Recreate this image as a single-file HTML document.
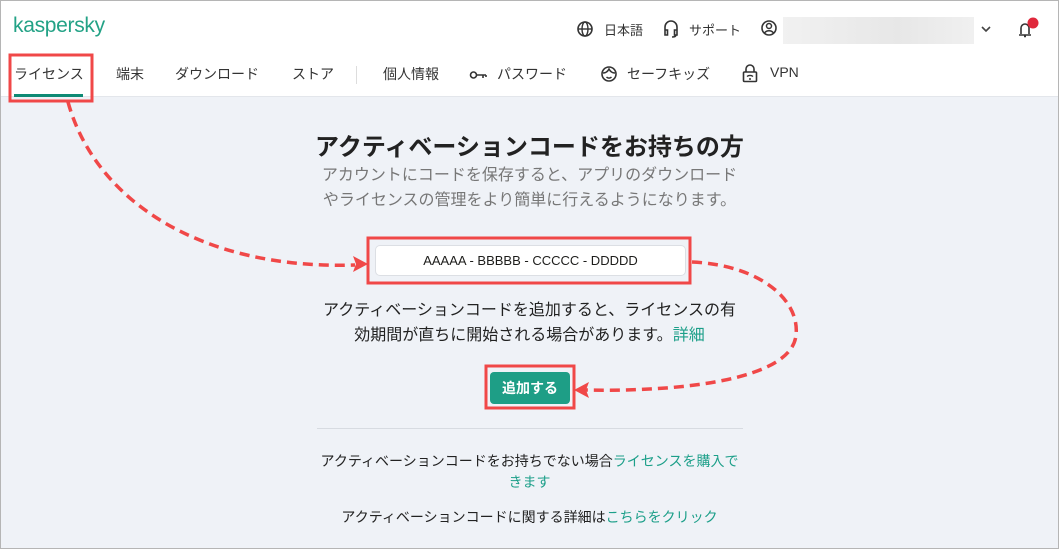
<!DOCTYPE html>
<html><head><meta charset="utf-8"><style>
*{margin:0;padding:0;box-sizing:border-box}
body{width:1059px;height:549px;overflow:hidden;background:#eff2f7;font-family:"Liberation Sans","Noto Sans CJK JP",sans-serif;color:#1d1d1b;position:relative}
.frame{position:absolute;inset:0;border:1px solid #b5b5b5;pointer-events:none;z-index:5}
.hdr{position:absolute;left:0;top:0;width:1059px;height:97px;background:#fff;border-bottom:1px solid #e3e6eb}
.t{position:absolute;white-space:nowrap}
.logo{left:13px;top:14px;font-size:21px;color:#23a286;letter-spacing:-0.3px}
.nav{top:64px;font-size:14px;color:#333}
.top{top:20px;font-size:13px;color:#333}
.c{position:absolute;left:0;width:1059px;text-align:center}
a{color:#1c9f89;text-decoration:none}
</style></head><body>
<div class="hdr"></div>
<div class="t logo">kaspersky</div>
<div class="t nav" style="left:14px">ライセンス</div>
<div style="position:absolute;left:14px;top:94px;width:69px;height:3px;background:#0e8a74"></div>
<div class="t nav" style="left:116px">端末</div>
<div class="t nav" style="left:175px">ダウンロード</div>
<div class="t nav" style="left:292px">ストア</div>
<div style="position:absolute;left:356px;top:66px;width:1px;height:18px;background:#ddd"></div>
<div class="t nav" style="left:383px">個人情報</div>
<svg style="position:absolute;left:469px;top:70px" width="20" height="10"><circle cx="4.5" cy="5" r="3" fill="none" stroke="#333" stroke-width="1.6"/><path d="M7.5 5H17M14 5v3M17 5v2" stroke="#333" stroke-width="1.6" fill="none"/></svg>
<div class="t nav" style="left:497px">パスワード</div>
<svg style="position:absolute;left:600px;top:65px" width="18" height="18"><circle cx="9" cy="9" r="7" fill="none" stroke="#333" stroke-width="1.6"/><path d="M3 8c3 0 5-2 6-4 1 2 3 4 6 4M6.5 12c1.5 1.5 3.5 1.5 5 0" fill="none" stroke="#333" stroke-width="1.5"/></svg>
<div class="t nav" style="left:627px">セーフキッズ</div>
<svg style="position:absolute;left:742px;top:64px" width="16" height="19"><path d="M4 8V5a4 4 0 0 1 8 0v3" fill="none" stroke="#333" stroke-width="1.6"/><rect x="1.5" y="8" width="13" height="9.5" rx="1" fill="none" stroke="#333" stroke-width="1.6"/><path d="M5 12.5a4 3 0 0 1 6 0M7 15h2" stroke="#333" stroke-width="1.4" fill="none"/></svg>
<div class="t nav" style="left:770px">VPN</div>

<svg style="position:absolute;left:576px;top:20px" width="18" height="18"><circle cx="9" cy="9" r="7" fill="none" stroke="#333" stroke-width="1.6"/><ellipse cx="9" cy="9" rx="3" ry="7" fill="none" stroke="#333" stroke-width="1.4"/><path d="M2 9h14" stroke="#333" stroke-width="1.4"/></svg>
<div class="t top" style="left:604px">日本語</div>
<svg style="position:absolute;left:662px;top:19px" width="18" height="19"><path d="M3 11V8a6 6 0 0 1 12 0v3M3 11h2.5v5H3zM15 11h-2.5v5H15zM14 16c0 1.5-2 2-4 2" fill="none" stroke="#333" stroke-width="1.6"/></svg>
<div class="t top" style="left:689px">サポート</div>
<svg style="position:absolute;left:760px;top:19px" width="18" height="18"><circle cx="9" cy="9" r="7" fill="none" stroke="#333" stroke-width="1.6"/><circle cx="9" cy="7" r="2.5" fill="none" stroke="#333" stroke-width="1.5"/><path d="M4.5 14c2-3 7-3 9 0" fill="none" stroke="#333" stroke-width="1.5"/></svg>
<div style="position:absolute;left:783px;top:17px;width:191px;height:27px;background:linear-gradient(90deg,#f1f1f1,#e7e7e7 60%,#f0f0f0)"></div>
<svg style="position:absolute;left:980px;top:24px" width="12" height="10"><path d="M2 3l4 4 4-4" fill="none" stroke="#444" stroke-width="1.6"/></svg>
<svg style="position:absolute;left:1015px;top:16px" width="24" height="24"><path d="M4 19h12M6 18v-6a4 4 0 0 1 8 0v6M9 20.5h2" fill="none" stroke="#333" stroke-width="1.6"/><circle cx="18" cy="7" r="5.5" fill="#e0283c"/></svg>

<div class="c" style="top:127px;font-size:24px;font-weight:bold;color:#222">アクティベーションコードをお持ちの方</div>
<div class="c" style="top:163px;font-size:16px;line-height:25px;color:#777">アカウントにコードを保存すると、アプリのダウンロード<br>やライセンスの管理をより簡単に行えるようになります。</div>
<div style="position:absolute;left:375px;top:245px;width:311px;height:31px;background:#fff;border:1px solid #dcdfe4;border-radius:5px;text-align:center;font-size:13px;line-height:29px">AAAAA - BBBBB - CCCCC - DDDDD</div>
<div class="c" style="top:298px;font-size:16px;line-height:25px;color:#222">アクティベーションコードを追加すると、ライセンスの有<br>効期間が直ちに開始される場合があります。<a>詳細</a></div>
<div style="position:absolute;left:490px;top:372px;width:80px;height:32px;background:#1e9e86;border-radius:4px;color:#fff;font-weight:bold;font-size:14px;text-align:center;line-height:32px">追加する</div>
<div style="position:absolute;left:317px;top:428px;width:426px;height:1px;background:#d7dbe1"></div>
<div class="c" style="top:451px;font-size:14px;line-height:21px;color:#222">アクティベーションコードをお持ちでない場合<a>ライセンスを購入で</a><br><a>きます</a></div>
<div class="c" style="top:507px;font-size:14px;color:#222">アクティベーションコードに関する詳細は<a>こちらをクリック</a></div>

<svg style="position:absolute;left:0;top:0;z-index:4" width="1059" height="549">
<g fill="none" stroke="#f04848" stroke-width="3">
<rect x="10" y="55" width="82" height="46"/>
<rect x="368" y="238" width="322" height="45"/>
<rect x="486" y="366" width="88" height="42"/>
</g>
<g fill="none" stroke="#f04848" stroke-width="3.5" stroke-dasharray="10 6">
<path d="M68 102C95 200 200 270 355 265"/>
<path d="M692 262C760 265 800 300 796 335C792 380 680 392 585 390"/>
</g>
<path d="M368 264l-15-8 3 8-3 8z" fill="#f04848"/>
<path d="M574 390l15-8-3 8 3 8z" fill="#f04848"/>
</svg>
<div class="frame"></div>
</body></html>
